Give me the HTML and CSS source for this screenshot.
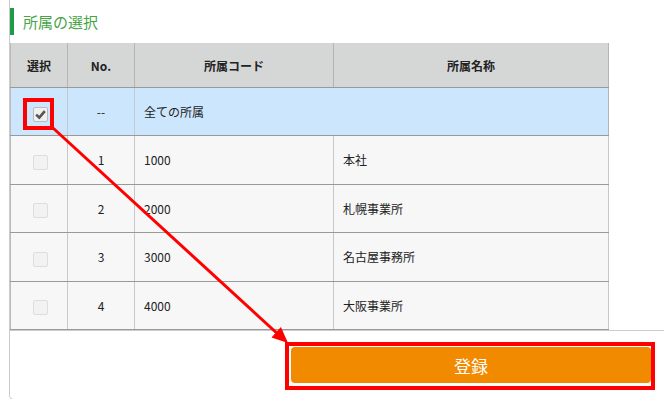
FILE: index.html
```html
<!DOCTYPE html>
<html lang="ja">
<head>
<meta charset="utf-8">
<title>所属の選択</title>
<link rel="stylesheet" href="styles.css">
</head>
<body>
<div class="panel">
  <h2 class="title">所属の選択</h2>
  <table class="grid">
    <thead>
      <tr>
        <th class="c-sel">選択</th>
        <th class="c-no">No.</th>
        <th class="c-code">所属コード</th>
        <th class="c-name">所属名称</th>
      </tr>
    </thead>
    <tbody>
      <tr class="all">
        <td class="center"><span class="cb checked"><svg viewBox="0 0 15 15" width="15" height="15"><path d="M3.2 7.6 L6.3 10.6 L11.8 4.2" fill="none" stroke="#555" stroke-width="2.6"/></svg></span></td>
        <td class="center">--</td>
        <td class="span-cell">全ての所属</td>
        <td></td>
      </tr>
      <tr>
        <td class="center"><span class="cb"></span></td>
        <td class="center">1</td>
        <td>1000</td>
        <td>本社</td>
      </tr>
      <tr>
        <td class="center"><span class="cb"></span></td>
        <td class="center">2</td>
        <td>2000</td>
        <td>札幌事業所</td>
      </tr>
      <tr>
        <td class="center"><span class="cb"></span></td>
        <td class="center">3</td>
        <td>3000</td>
        <td>名古屋事務所</td>
      </tr>
      <tr>
        <td class="center"><span class="cb"></span></td>
        <td class="center">4</td>
        <td>4000</td>
        <td>大阪事業所</td>
      </tr>
    </tbody>
  </table>
  <div class="footer">
    <button class="submit" type="button">登録</button>
  </div>
</div>
<svg class="annot" width="664" height="399" viewBox="0 0 664 399">
  <rect x="25" y="100" width="27" height="28" fill="none" stroke="#ff0000" stroke-width="4"/>
  <line x1="53" y1="128" x2="280" y2="336" stroke="#ff0000" stroke-width="3"/>
  <polygon points="288,343 271.5,337.4 280.9,327" fill="#ff0000"/>
  <rect x="287" y="344" width="366" height="44" fill="none" stroke="#ff0000" stroke-width="4"/>
</svg>
</body>
</html>
```

FILE: styles.css
```css
html, body {
  margin: 0;
  padding: 0;
  background: #ffffff;
}
body {
  width: 664px;
  height: 399px;
  overflow: hidden;
  position: relative;
  font-family: "Noto Sans CJK JP", "Noto Sans", sans-serif;
  font-size: 12px;
  color: #222;
}
.panel {
  margin-left: 9px;
  height: 400px;
  border-left: 1px solid #cccccc;
  border-bottom: 1px solid #cccccc;
  border-bottom-left-radius: 5px;
  box-sizing: border-box;
  padding-top: 8px;
}
.title {
  margin: 0 0 8px 0;
  height: 27px;
  border-left: 4px solid #1e9b48;
  padding-left: 9px;
  font-size: 15px;
  font-weight: normal;
  line-height: 27px;
  color: #46a545;
}
.grid {
  border-collapse: collapse;
  width: 599px;
  table-layout: fixed;
  border-left: 1px solid #bbbbbb;
}
.grid th {
  background: #d5d6d6;
  height: 44px;
  font-weight: bold;
  font-size: 12px;
  color: #222;
  border-right: 1px solid #b4b4b4;
  border-bottom: 1px solid #999999;
  padding: 0;
}
.c-sel { width: 56px; }
.c-no { width: 66px; }
.c-code { width: 198px; }
.c-name { width: auto; }
.grid td {
  height: 47.5px;
  padding: 0 0 0 9px;
  background: #f7f7f7;
  border-right: 1px solid #c8c8c8;
  border-bottom: 1px solid #999999;
  color: #222;
}
.grid td.center {
  text-align: center;
  padding: 0;
}
.grid tr.all td {
  background: #cce7fd;
  height: 47px;
}
.grid tr.all td.span-cell {
  border-right-color: #cce7fd;
}
.grid tr.all td:last-child {
  border-right-color: #b4b4b4;
}
.cb {
  display: inline-block;
  width: 13px;
  height: 13px;
  border: 1px solid #dddddd;
  border-radius: 2px;
  background: #f2f2f2;
  vertical-align: middle;
  position: relative;
  left: 1px;
  top: 1px;
}
.cb.checked {
  border-color: #bbbbbb;
  background: #f0f0f0;
}
.cb svg {
  display: block;
  margin: -1px 0 0 -1px;
}
.footer {
  border-top: 1px solid #cccccc;
  display: flex;
  justify-content: flex-end;
  padding: 16px 13px 0 0;
}
.submit {
  width: 360px;
  height: 36px;
  background: #f28a00;
  border: none;
  border-radius: 4px;
  color: #ffffff;
  font-family: "Noto Sans CJK JP", sans-serif;
  font-size: 17px;
  padding: 0;
}
.annot {
  position: absolute;
  left: 0;
  top: 0;
  pointer-events: none;
}
```
